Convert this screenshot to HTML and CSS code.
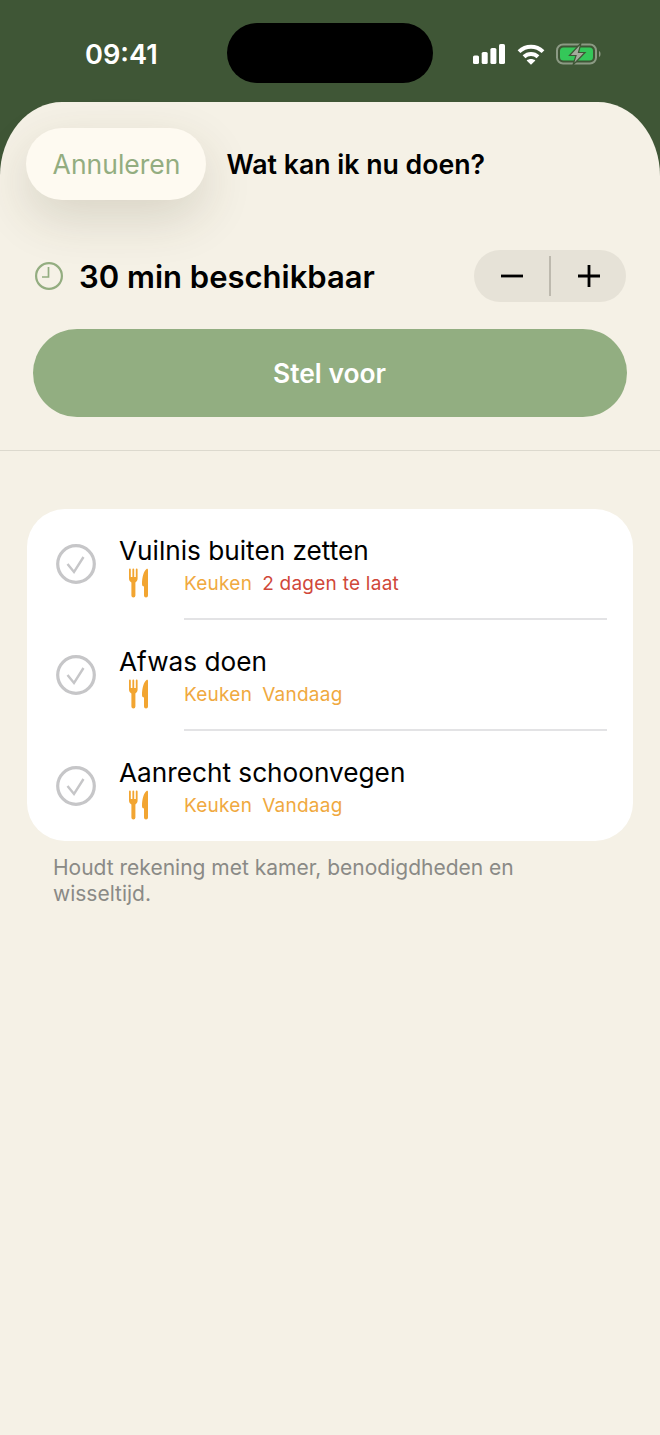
FILE: index.html
```html
<!DOCTYPE html>
<html lang="nl">
<head>
    <meta charset="UTF-8">
    <meta name="viewport" content="width=device-width, initial-scale=1.0">
    <title>Wat kan ik nu doen?</title>
    <link rel="stylesheet" href="styles.css">
</head>
<body>
    <div class="status-bar">
        <span class="status-time">09:41</span>
        <div class="status-island"></div>
        <div class="status-icons">
            <svg class="icon-signal" width="32" height="20" viewBox="0 0 32 20" fill="#fff">
                <rect x="0" y="11.5" width="6" height="8.5" rx="1.6"/>
                <rect x="8.7" y="8" width="6" height="12" rx="1.6"/>
                <rect x="17.4" y="4" width="6" height="16" rx="1.6"/>
                <rect x="26" y="0" width="6" height="20" rx="1.6"/>
            </svg>
            <svg class="icon-wifi" width="28" height="21" viewBox="0 0 28 21" fill="none" stroke="#fff" stroke-width="4">
                <path d="M2 7.6 C9 1 19 1 26 7.6"/>
                <path d="M7 12.8 C11 9 17 9 21 12.8"/>
                <path d="M14 20.8 L9.6 16.4 C12 14.4 16 14.4 18.4 16.4 Z" fill="#fff" stroke="none"/>
            </svg>
            <svg class="icon-battery" width="46" height="22" viewBox="0 0 46 22">
                <rect x="1" y="1.5" width="39" height="19" rx="6" fill="none" stroke="#8c9a84" stroke-width="2"/>
                <rect x="4" y="4.5" width="33" height="13" rx="3.5" fill="#34c759"/>
                <path d="M43 8 C45 8.6 45 13.4 43 14 Z" fill="#8c9a84"/>
                <path d="M25 0 L13.5 12.5 H20 L17 22 L29 9.5 H22.5 Z" fill="#a3ab9c" stroke="#3f5636" stroke-width="1.2"/>
            </svg>
        </div>
    </div>

    <div class="sheet">
        <div class="sheet-header">
            <button class="cancel-btn">Annuleren</button>
            <h1>Wat kan ik nu doen?</h1>
        </div>

        <div class="time-row">
            <!-- clock -->
            <svg class="icon-clock" width="28" height="28" viewBox="0 0 28 28" fill="none" stroke="#93ad80" stroke-width="2.2">
                <circle cx="14" cy="14" r="12.9"/>
                <path d="M13.5 5 V15 H7" stroke-width="1.7"/>
            </svg>
            <span class="time-label">30 min beschikbaar</span>
            <div class="stepper">
                <div class="stepper-btn">
                    <svg width="22" height="22" viewBox="0 0 22 22" stroke="#000" stroke-width="2.8"><path d="M0 11 H22"/></svg>
                </div>
                <div class="stepper-line"></div>
                <div class="stepper-btn">
                    <svg width="22" height="22" viewBox="0 0 22 22" stroke="#000" stroke-width="2.8"><path d="M0 11 H22 M11 0 V22"/></svg>
                </div>
            </div>
        </div>

        <button class="suggest-btn">Stel voor</button>
        <div class="sheet-divider"></div>

        <div class="task-card">
            <div class="task-row">
                <svg class="icon-check" width="40" height="40" viewBox="0 0 40 40" fill="none" stroke="#c6c6c8">
                    <circle cx="20" cy="20" r="18.3" stroke-width="3.2"/>
                    <path d="M11.5 20 L18 28 L27.5 13" stroke-width="2.4"/>
                </svg>
                <div class="task-body">
                    <div class="task-title">Vuilnis buiten zetten</div>
                    <div class="task-meta">
                        <svg class="icon-fork" width="20" height="30" viewBox="0 0 20 30" fill="#f2a531">
                            <path d="M0 1.5 A0.9 0.9 0 0 1 1.8 1.5 V9 H3.4 V1.5 A0.9 0.9 0 0 1 5.2 1.5 V9 H6.8 V1.5 A0.9 0.9 0 0 1 8.6 1.5 V10.5 C8.6 12.8 7.4 13.8 6.4 14.4 V27.5 A2 2 0 0 1 2.4 27.5 V14.4 C1.2 13.8 0 12.8 0 10.5 Z"/>
                            <path d="M17.5 1 C18.4 0.4 19 1 19 2 V27.5 A2 2 0 0 1 15 27.5 V18.5 C14 18.5 13 17.8 13 16 C13 9 14.8 3 17.5 1 Z"/>
                        </svg>
                        <span class="task-room">Keuken</span>
                        <span class="task-late">2 dagen te laat</span>
                    </div>
                </div>
            </div>
            <div class="task-row">
                <svg class="icon-check" width="40" height="40" viewBox="0 0 40 40" fill="none" stroke="#c6c6c8">
                    <circle cx="20" cy="20" r="18.3" stroke-width="3.2"/>
                    <path d="M11.5 20 L18 28 L27.5 13" stroke-width="2.4"/>
                </svg>
                <div class="task-body">
                    <div class="task-title">Afwas doen</div>
                    <div class="task-meta">
                        <svg class="icon-fork" width="20" height="30" viewBox="0 0 20 30" fill="#f2a531">
                            <path d="M0 1.5 A0.9 0.9 0 0 1 1.8 1.5 V9 H3.4 V1.5 A0.9 0.9 0 0 1 5.2 1.5 V9 H6.8 V1.5 A0.9 0.9 0 0 1 8.6 1.5 V10.5 C8.6 12.8 7.4 13.8 6.4 14.4 V27.5 A2 2 0 0 1 2.4 27.5 V14.4 C1.2 13.8 0 12.8 0 10.5 Z"/>
                            <path d="M17.5 1 C18.4 0.4 19 1 19 2 V27.5 A2 2 0 0 1 15 27.5 V18.5 C14 18.5 13 17.8 13 16 C13 9 14.8 3 17.5 1 Z"/>
                        </svg>
                        <span class="task-room">Keuken</span>
                        <span class="task-room">Vandaag</span>
                    </div>
                </div>
            </div>
            <div class="task-row">
                <svg class="icon-check" width="40" height="40" viewBox="0 0 40 40" fill="none" stroke="#c6c6c8">
                    <circle cx="20" cy="20" r="18.3" stroke-width="3.2"/>
                    <path d="M11.5 20 L18 28 L27.5 13" stroke-width="2.4"/>
                </svg>
                <div class="task-body">
                    <div class="task-title">Aanrecht schoonvegen</div>
                    <div class="task-meta">
                        <svg class="icon-fork" width="20" height="30" viewBox="0 0 20 30" fill="#f2a531">
                            <path d="M0 1.5 A0.9 0.9 0 0 1 1.8 1.5 V9 H3.4 V1.5 A0.9 0.9 0 0 1 5.2 1.5 V9 H6.8 V1.5 A0.9 0.9 0 0 1 8.6 1.5 V10.5 C8.6 12.8 7.4 13.8 6.4 14.4 V27.5 A2 2 0 0 1 2.4 27.5 V14.4 C1.2 13.8 0 12.8 0 10.5 Z"/>
                            <path d="M17.5 1 C18.4 0.4 19 1 19 2 V27.5 A2 2 0 0 1 15 27.5 V18.5 C14 18.5 13 17.8 13 16 C13 9 14.8 3 17.5 1 Z"/>
                        </svg>
                        <span class="task-room">Keuken</span>
                        <span class="task-room">Vandaag</span>
                    </div>
                </div>
            </div>
        </div>

        <p class="footnote">Houdt rekening met kamer, benodigdheden en wisseltijd.</p>
    </div>
</body>
</html>
```

FILE: styles.css
```css
* {
    margin: 0;
    padding: 0;
    box-sizing: border-box;
    font-family: 'Inter', 'Liberation Sans', sans-serif;
}

html, body {
    height: 100%;
}

body {
    background-color: #3f5636;
    color: #000;
    display: flex;
    flex-direction: column;
    overflow: hidden;
}

/* Status bar */
.status-bar {
    height: 102px;
    flex-shrink: 0;
    display: flex;
    align-items: flex-start;
    padding: 23px 58px 0 85px;
}

.status-time {
    width: 142px;
    margin-top: 15px;
    font-size: 27.2px;
    line-height: 33px;
    font-weight: 600;
    color: #fff;
}

.status-island {
    width: 206px;
    height: 60px;
    border-radius: 30px;
    background-color: #000;
}

.status-icons {
    margin-left: auto;
    margin-top: 20px;
    display: flex;
    align-items: center;
    gap: 11.5px;
}

/* Sheet */
.sheet {
    flex: 1;
    background-color: #f5f1e6;
    border-radius: 62px 62px 0 0 / 74px 74px 0 0;
    padding: 26px 27px 0 26px;
}

.sheet-header {
    display: flex;
    align-items: center;
    gap: 20.5px;
}

.cancel-btn {
    width: 180px;
    height: 72px;
    border: none;
    border-radius: 36px;
    background-color: #fefaf1;
    box-shadow: 0 18px 50px rgba(70, 60, 30, 0.16);
    color: #93ad80;
    font-size: 26.5px;
    font-weight: 400;
    padding-left: 1px;
}

.sheet-header h1 {
    font-size: 26.7px;
    font-weight: 600;
}

.time-row {
    display: flex;
    align-items: center;
    margin-top: 50px;
    padding: 0 7px 0 9px;
}

.icon-clock {
    flex-shrink: 0;
}

.time-label {
    margin-left: 16px;
    font-size: 31px;
    font-weight: 600;
}

.stepper {
    margin-left: auto;
    width: 152px;
    height: 52px;
    border-radius: 26px;
    background-color: #e6e2d7;
    display: flex;
    align-items: center;
}

.stepper-btn {
    flex: 1;
    display: flex;
    align-items: center;
    justify-content: center;
}

.stepper-line {
    width: 2px;
    height: 40px;
    background-color: #bdb9ae;
}

.suggest-btn {
    display: block;
    width: 594px;
    height: 88px;
    margin: 27px 0 0 7px;
    padding-right: 1px;
    border: none;
    border-radius: 44px;
    background-color: #92ae81;
    color: #fff;
    font-size: 26.4px;
    font-weight: 600;
}

.sheet-divider {
    height: 1px;
    margin: 33px -27px 0 -26px;
    background-color: #dcd9ce;
}

/* Task list */
.task-card {
    width: 606px;
    margin: 58px 0 0 1px;
    background-color: #fff;
    border-radius: 38px;
}

.task-row {
    height: 111px;
    padding: 0 26px 0 29px;
    display: flex;
    align-items: flex-start;
    position: relative;
}

.task-row:last-child {
    height: 110px;
}

.task-row + .task-row::before {
    content: '';
    position: absolute;
    top: -2px;
    left: 157px;
    right: 26px;
    height: 2px;
    background-color: #e3e3e5;
}

.icon-check {
    margin-top: 35px;
    flex-shrink: 0;
}

.task-body {
    margin-left: 23px;
    padding-top: 25px;
}

.task-title {
    font-size: 26.2px;
    line-height: 33px;
}

.task-meta {
    display: flex;
    align-items: center;
    height: 30px;
    margin-top: 1px;
    margin-left: 10px;
}

.icon-fork {
    flex-shrink: 0;
}

.task-room, .task-late {
    font-size: 19px;
    letter-spacing: 0.25px;
    color: #f0a93f;
    margin-left: 10px;
}

.task-room:first-of-type {
    margin-left: 35px;
}

.task-late {
    color: #d0483a;
}

.footnote {
    width: 500px;
    margin: 14px 0 0 27px;
    font-size: 21px;
    line-height: 26px;
    color: #8a8a86;
}
```
